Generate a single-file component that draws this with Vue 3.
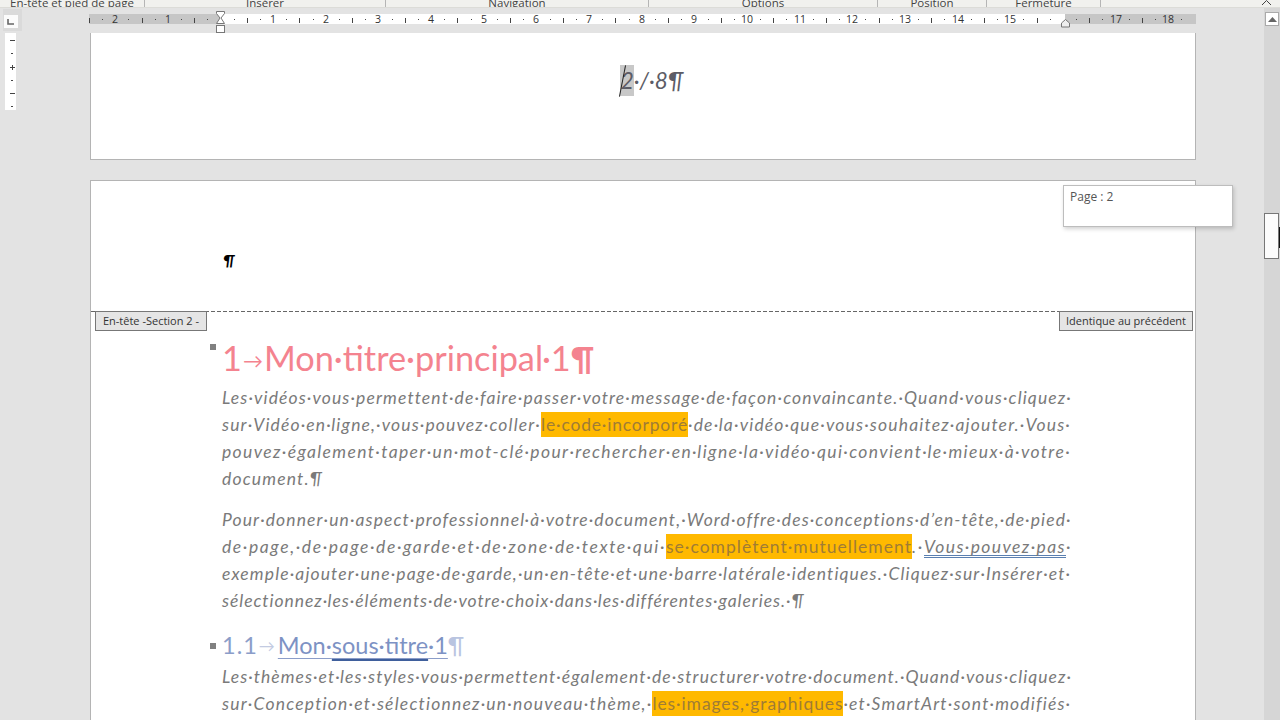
<template>
  <div class="window">
    <div class="ribbon">
      <div v-for="g in ribbonGroups" :key="g.label" class="ribbon-group" :style="{ width: g.width + 'px' }">
        {{ g.label }}
      </div>
      <svg class="collapse" width="12" height="6" viewBox="0 0 12 6">
        <path d="M1 5 L5.5 0.5 L10 5" fill="none" stroke="#444" stroke-width="1" />
      </svg>
    </div>

    <div class="content">
      <div class="main">
        <div class="ruler-row">
          <div class="ruler-left">
            <div class="tab-stop">
              <svg width="14" height="13" viewBox="0 0 14 13">
                <path d="M4 4 V9 H10" fill="none" stroke="#666" stroke-width="1.6" />
              </svg>
            </div>
          </div>
          <svg class="ruler" width="1108" height="25" viewBox="88 8 1108 25">
            <rect x="89" y="14" width="131" height="10" fill="#c6c6c6" />
            <rect x="220" y="14" width="845" height="10" fill="#fff" />
            <rect x="1065" y="14" width="131" height="10" fill="#c6c6c6" />
            <g v-for="t in rulerTicks" :key="t.x">
              <rect v-if="t.kind === 'dot'" :x="t.x" y="19" width="1" height="1" fill="#444" />
              <rect v-else-if="t.kind === 'half'" :x="t.x" y="18" width="1" height="5" fill="#444" />
              <text v-else :x="t.x" y="23" text-anchor="middle" class="ruler-num">{{ t.label }}</text>
            </g>
            <path d="M216.5 11.5 H224.5 V13.5 L221 18 L224.5 23.5 H216.5 L220 18 L216.5 13.5 Z" fill="#fff" stroke="#777" />
            <rect x="216.5" y="25.5" width="8" height="7" fill="#fff" stroke="#777" />
            <path d="M1065.5 19.5 L1069.5 23 V27 H1061.5 V23 Z" fill="#eee" stroke="#777" />
          </svg>
        </div>

        <div class="workspace">
          <div class="vruler-col">
            <svg class="vruler" width="11" height="77" viewBox="0 0 11 77">
              <rect x="5" y="7" width="5" height="1" fill="#444" />
              <rect x="6" y="20" width="2" height="1" fill="#444" />
              <rect x="5" y="34" width="5" height="1" fill="#444" />
              <rect x="7" y="32" width="1" height="5" fill="#444" />
              <rect x="6" y="47" width="2" height="1" fill="#444" />
              <rect x="5" y="60" width="5" height="1" fill="#444" />
              <rect x="6" y="73" width="2" height="1" fill="#444" />
            </svg>
          </div>

          <div class="pages">
            <div class="page page-first">
              <p class="footer-num"><span class="sel">2</span>·/·8¶</p>
            </div>

            <div class="page page-second">
              <div class="header-zone">
                <span class="header-mark">¶</span>
              </div>
              <div class="tag tag-left">En-tête -Section 2 -</div>
              <div class="tag tag-right">Identique au précédent</div>

              <div class="body">
                <h1 class="h1"><i class="mark"></i>1<span class="h1-arrow">→</span>Mon·titre·principal·1<span class="h1-p">¶</span></h1>

                <p v-for="(para, i) in paragraphs" :key="i" class="para" :class="para.cls">
                  <template v-if="para.sub">
                    <i class="mark mark-sub"></i><span class="sub-num">1.1</span><span class="sub-arrow">→</span><span class="sub-u">Mon·<span class="sub-dbl">sous·titre</span>·1</span><span class="sub-p">¶</span>
                  </template>
                  <span
                    v-for="(line, j) in para.lines"
                    v-else
                    :key="j"
                    :ref="(el) => el && lineEls.push(el)"
                    class="line"
                  >
                    <span v-for="(seg, k) in line" :key="k" :class="seg.c" :data-w="seg.w">{{ seg.t }}</span>
                  </span>
                </p>
              </div>
            </div>
          </div>
        </div>
      </div>

      <div class="scrollbar">
        <div class="scroll-up">
          <svg width="9" height="5" viewBox="0 0 9 5"><path d="M0 5 L4.5 0 L9 5 Z" fill="#666" /></svg>
        </div>
        <div class="scroll-thumb"></div>
        <div class="cursor-bit"></div>
      </div>
    </div>

    <div class="page-tip">Page : 2</div>
  </div>
</template>

<script setup>
import { onMounted } from 'vue'

const ribbonGroups = [
  { label: 'En-tête et pied de page', width: 145 },
  { label: 'Insérer', width: 241 },
  { label: 'Navigation', width: 263 },
  { label: 'Options', width: 229 },
  { label: 'Position', width: 109 },
  { label: 'Fermeture', width: 114 },
]

// one ruler unit is 52.65px, zero sits on the left margin
const rulerTicks = []
for (let q = -10; q <= 74; q++) {
  const x = Math.round(220.5 + (q * 52.65) / 4)
  // 16 is hidden under the right indent marker
  if (q === 0 || q === 64 || x < 89 || x > 1190) continue
  if (q % 4 === 0) rulerTicks.push({ x, kind: 'num', label: Math.abs(q / 4) })
  else if (q % 2 === 0) rulerTicks.push({ x, kind: 'half' })
  else rulerTicks.push({ x, kind: 'dot' })
}

const txt = (t, w) => ({ t, w })
const hl = (t, w) => ({ t, w, c: 'hl' })

const paragraphs = [
  {
    lines: [
      [txt('Les·vidéos·vous·permettent·de·faire·passer·votre·message·de·façon·convaincante.·Quand·vous·cliquez·')],
      [txt('sur·Vidéo·en·ligne,·vous·pouvez·coller·', 319), hl('le·code·incorporé', 147), txt('·de·la·vidéo·que·vous·souhaitez·ajouter.·Vous·')],
      [txt('pouvez·également·taper·un·mot-clé·pour·rechercher·en·ligne·la·vidéo·qui·convient·le·mieux·à·votre·')],
      [txt('document.¶', 101)],
    ],
  },
  {
    lines: [
      [txt('Pour·donner·un·aspect·professionnel·à·votre·document,·Word·offre·des·conceptions·d’en-tête,·de·pied·')],
      [txt('de·page,·de·page·de·garde·et·de·zone·de·texte·qui·', 444), hl('se·complètent·mutuellement', 246), txt('.·', 12), { t: 'Vous·pouvez·pas', w: 142, c: 'dbl' }, txt('·')],
      [txt('exemple·ajouter·une·page·de·garde,·un·en-tête·et·une·barre·latérale·identiques.·Cliquez·sur·Insérer·et·')],
      [txt('sélectionnez·les·éléments·de·votre·choix·dans·les·différentes·galeries.·¶', 582)],
    ],
  },
  { sub: true, cls: 'h2' },
  {
    cls: 'para-tight',
    lines: [
      [txt('Les·thèmes·et·les·styles·vous·permettent·également·de·structurer·votre·document.·Quand·vous·cliquez·')],
      [txt('sur·Conception·et·sélectionnez·un·nouveau·thème,·', 430), hl('les·images,·graphiques', 191), txt('·et·SmartArt·sont·modifiés·')],
    ],
  },
]

const lineEls = []
const LINE_WIDTH = 849

// Word stretches each justified line, the dots have no real spaces to grow.
// Segments with a data-w get their measured width, the rest share what is left.
onMounted(() => {
  for (const el of lineEls) {
    el.style.letterSpacing = '0px'
    let chars = el.textContent.trim().length
    for (const seg of el.querySelectorAll('[data-w]')) {
      const n = seg.textContent.length
      seg.style.letterSpacing = '0px'
      seg.style.letterSpacing = (Number(seg.dataset.w) - seg.getBoundingClientRect().width) / n + 'px'
      chars -= n
    }
    if (chars > 0) {
      const natural = el.getBoundingClientRect().width
      el.style.letterSpacing = (LINE_WIDTH - natural) / chars + 'px'
    }
  }
})
</script>

<style scoped>
.window {
  display: flex;
  flex-direction: column;
  width: 1280px;
  height: 720px;
  overflow: hidden;
  position: relative;
  background: #e3e3e3;
  font-family: Lato, "Open Sans", sans-serif;
}

.ribbon {
  display: flex;
  flex: none;
  position: relative;
  height: 8px;
  overflow: hidden;
  background: #f1f1ee;
  border-bottom: 1px solid #dcdcd8;
  box-sizing: border-box;
}

.ribbon-group {
  flex: none;
  height: 8px;
  box-sizing: border-box;
  border-right: 1px solid #b5b5b5;
  text-align: center;
  font-family: "Open Sans", sans-serif;
  font-size: 11.5px;
  line-height: 6px;
  color: #444;
  white-space: nowrap;
}

.collapse {
  position: absolute;
  top: 0;
  left: 1261px;
}

.content {
  display: flex;
  flex: 1;
  min-height: 0;
}

.main {
  display: flex;
  flex-direction: column;
  width: 1264px;
}

.ruler-row {
  display: flex;
  flex: none;
  height: 25px;
}

.ruler-left {
  flex: none;
  width: 88px;
  padding: 1px 0 0 3px;
  box-sizing: border-box;
}

.tab-stop {
  display: flex;
  align-items: center;
  justify-content: center;
  box-sizing: border-box;
  width: 19px;
  height: 22px;
  padding: 2px 4px 0 0;
  background: #dadada;
}

.tab-stop svg {
  background: #fbfbfb;
}

.ruler {
  display: block;
  flex: none;
}

.ruler-num {
  font-family: "Open Sans", sans-serif;
  font-size: 10.5px;
  fill: #333;
}

.workspace {
  display: flex;
  flex: 1;
  min-height: 0;
}

.vruler-col {
  flex: none;
  width: 90px;
  padding-left: 5px;
  box-sizing: border-box;
}

.vruler {
  display: block;
  background: #fff;
}

.pages {
  flex: none;
  width: 1106px;
  overflow: hidden;
}

.page {
  box-sizing: border-box;
  background: #fff;
  border: 1px solid #b4b4b4;
  position: relative;
}

.page-first {
  height: 127px;
  border-top: none;
  padding: 32px 115px 0 132px;
}

.footer-num {
  margin: 0;
  text-align: center;
  font-size: 22.5px;
  font-style: italic;
  line-height: 28px;
  color: #5c5c66;
}

.sel {
  position: relative;
  display: inline-block;
  background: #c8c8c8;
  line-height: 31px;
  padding: 0 0 0 1px;
}

.sel::before {
  content: "";
  position: absolute;
  left: 2px;
  top: 0;
  width: 1px;
  height: 32px;
  background: #222;
  transform: rotate(11deg);
}

.page-second {
  margin-top: 20px;
  height: 700px;
}

.header-zone {
  box-sizing: border-box;
  height: 131px;
  background: repeating-linear-gradient(90deg, #666 0 4px, transparent 4px 6px) bottom / 100% 1px no-repeat;
  padding: 64px 0 0 132px;
}

.header-mark {
  display: block;
  font-size: 16px;
  line-height: 30px;
  font-style: italic;
  font-weight: 700;
  color: #000;
}

.tag {
  position: absolute;
  top: 130px;
  box-sizing: border-box;
  height: 20px;
  background: #e5e5e5;
  border: 1px solid #777;
  font-family: "Open Sans", sans-serif;
  font-size: 11px;
  line-height: 18px;
  color: #333;
  white-space: nowrap;
  text-align: center;
}

.tag-left {
  left: 4px;
  width: 112px;
}

.tag-right {
  right: 2px;
  width: 134px;
}

.body {
  padding: 26px 0 0 131px;
}

.h1 {
  position: relative;
  height: 40px;
  margin: 0 0 5.5px;
  font-size: 34.3px;
  font-weight: 400;
  line-height: 40px;
  color: #f4838f;
  white-space: nowrap;
}

.h1-arrow {
  font-size: 20px;
  padding: 0 1px;
  vertical-align: 3px;
}

.h1-p {
  font-weight: 700;
  font-size: 32px;
}

.mark {
  position: absolute;
  left: -12px;
  top: 6px;
  width: 6px;
  height: 6px;
  background: #808080;
}

.mark-sub {
  top: 13px;
}

.para {
  position: relative;
  margin: 0 0 14px;
  font-size: 17.5px;
  font-style: italic;
  line-height: 27px;
  color: #7a7a7a;
}

.line {
  display: table;
  height: 27px;
  white-space: nowrap;
}

.hl {
  display: inline-block;
  background: #ffb900;
  font-style: normal;
  line-height: 25px;
  color: #a07c35;
}

.dbl {
  border-bottom: 3px double #5a7fb0;
  line-height: 16px;
  display: inline-block;
}

.h2 {
  height: 30px;
  margin: 16.5px 0 2.5px;
  font-size: 23.5px;
  font-style: normal;
  line-height: 30px;
  color: #8b9dc9;
  white-space: nowrap;
}

.sub-num {
  letter-spacing: 1px;
}

.sub-arrow {
  font-size: 16px;
  color: #c3cbe2;
  padding: 0 3px 0 1px;
  vertical-align: 2px;
}

.sub-u {
  color: #7d92c4;
  text-decoration: underline 1px #8b9dc9;
  text-underline-offset: 4px;
  text-decoration-skip-ink: none;
}

.sub-dbl {
  text-decoration: underline 1.5px #3f5f9c;
  text-underline-offset: 5px;
  text-decoration-skip-ink: none;
}

.sub-p {
  color: #b9c4e0;
}

.para-tight {
  margin-bottom: 0;
}

.scrollbar {
  flex: none;
  position: relative;
  width: 16px;
  background: #d6d6d6;
}

.scroll-up {
  display: flex;
  align-items: center;
  justify-content: center;
  box-sizing: border-box;
  width: 14px;
  height: 14px;
  margin: 4px 0 0 1px;
  background: #fff;
  border: 1px solid #aaa;
}

.scroll-thumb {
  position: absolute;
  top: 205px;
  left: 0;
  width: 15px;
  height: 46px;
  background: #fcfcfc;
  border: 1px solid #777;
  box-sizing: border-box;
}

.cursor-bit {
  position: absolute;
  top: 219px;
  right: 0;
  width: 1px;
  height: 21px;
  background: #111;
}

.page-tip {
  position: absolute;
  top: 185px;
  left: 1063px;
  box-sizing: border-box;
  width: 170px;
  height: 42px;
  padding: 3px 6px;
  background: #fff;
  border: 1px solid #bdbdbd;
  box-shadow: 1px 2px 4px rgb(0 0 0 / 0.18);
  font-family: "Open Sans", sans-serif;
  font-size: 12px;
  line-height: 16px;
  color: #555;
}
</style>
